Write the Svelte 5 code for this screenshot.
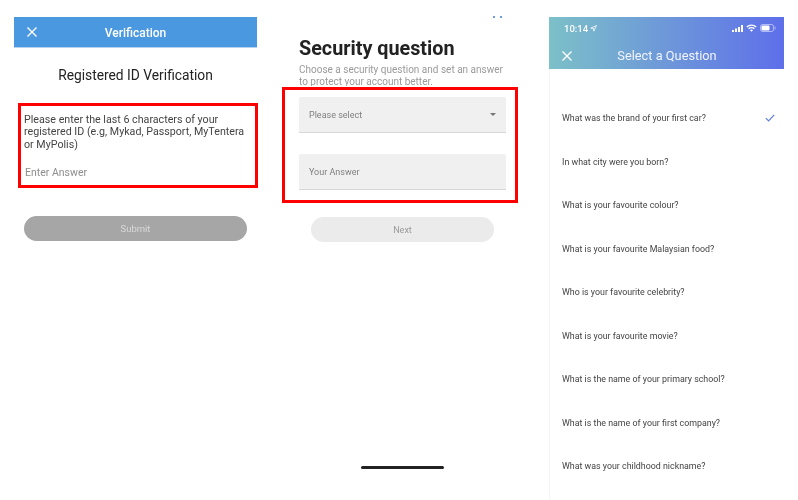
<script>
  const questions = [
    'What was the brand of your first car?',
    'In what city were you born?',
    'What is your favourite colour?',
    'What is your favourite Malaysian food?',
    'Who is your favourite celebrity?',
    'What is your favourite movie?',
    'What is the name of your primary school?',
    'What is the name of your first company?',
    'What was your childhood nickname?'
  ];
  let selected = $state(0);
</script>

<div class="page">
  <section class="verify">
    <header class="bar">
      <svg class="close" width="12" height="12" viewBox="0 0 12 12"><path d="M1.5 1.5l9 9M10.5 1.5l-9 9" /></svg>
      <span>Verification</span>
    </header>
    <h2>Registered ID Verification</h2>
    <div class="red id-box">
      <p>Please enter the last 6 characters of your registered ID (e.g, Mykad, Passport, MyTentera or MyPolis)</p>
      <span class="placeholder">Enter Answer</span>
    </div>
    <button type="button" class="submit">Submit</button>
  </section>

  <section class="security">
    <div class="dots"><i></i><i></i></div>
    <h1>Security question</h1>
    <p class="sub">Choose a security question and set an answer to protect your account better.</p>
    <div class="red form-box">
      <div class="field">
        <span>Please select</span>
        <svg width="6" height="3" viewBox="0 0 6 3"><path d="M0 0h6L3 3z" fill="#757575" /></svg>
      </div>
      <div class="field"><span>Your Answer</span></div>
    </div>
    <button type="button" class="next">Next</button>
    <div class="home"></div>
  </section>

  <section class="questions">
    <header class="grad">
      <div class="status">
        <span class="time">10:14
          <svg width="7" height="7" viewBox="0 0 7 7"><path d="M6.5.5L.8 3.2l2.7.3.3 2.7z" fill="none" stroke="#fff" stroke-width=".8" /></svg>
        </span>
        <span class="indicators">
          <svg width="11" height="7" viewBox="0 0 11 7" fill="#fff"><rect x="0" y="5" width="2" height="2" /><rect x="3" y="3.5" width="2" height="3.5" /><rect x="6" y="2" width="2" height="5" /><rect x="9" y="0" width="2" height="7" /></svg>
          <svg width="11" height="8" viewBox="0 0 11 8" fill="none" stroke="#fff" stroke-width="1.3"><path d="M.8 3a6.6 6.6 0 0 1 9.4 0M2.6 4.8a4 4 0 0 1 5.8 0" /><path d="M5.5 7.8L4 6.2a2.1 2.1 0 0 1 3 0z" fill="#fff" stroke="none" /></svg>
          <svg width="16" height="8" viewBox="0 0 16 8"><rect x=".5" y=".5" width="13" height="7" rx="2" fill="none" stroke="#fff" stroke-opacity=".5" /><rect x="1.5" y="1.5" width="8" height="5" rx="1" fill="#fff" /><rect x="14.5" y="2.5" width="1" height="3" fill="#fff" fill-opacity=".5" /></svg>
        </span>
      </div>
      <div class="title">
        <svg class="close" width="12" height="12" viewBox="0 0 12 12"><path d="M1.5 1.5l9 9M10.5 1.5l-9 9" /></svg>
        <span>Select a Question</span>
      </div>
    </header>
    <ul>
      {#each questions as q, i}
        <li>
          <button type="button" onclick={() => (selected = i)}>
            <span>{q}</span>
            {#if selected === i}
              <svg width="10" height="8" viewBox="0 0 10 8"><path d="M.8 4.2l2.8 2.8L9.2.8" fill="none" stroke="#5f7fe0" stroke-width="1.2" /></svg>
            {/if}
          </button>
        </li>
      {/each}
    </ul>
  </section>
</div>

<style>
  :global(body) {
    margin: 0;
    background: #fff;
  }
  .page {
    display: flex;
    width: 798px;
    height: 500px;
    overflow: hidden;
    font-family: Roboto, "Noto Sans", sans-serif;
    color: #333;
  }
  /* the reference is a scaled-down screenshot, text is a bit soft */
  .page span, .page p, .page h1, .page h2, .page svg, .page .submit, .page .next {
    filter: blur(0.35px);
  }
  .red {
    border: 3px solid #f00;
    box-sizing: border-box;
  }
  button {
    font: inherit;
    border: 0;
    padding: 0;
    background: none;
  }
  .close path {
    fill: none;
    stroke: #fff;
    stroke-width: 1.4;
  }

  /* left phone */
  .verify {
    width: 243px;
    margin: 17px 0 0 14px;
    flex-shrink: 0;
  }
  .bar {
    position: relative;
    display: flex;
    align-items: center;
    justify-content: center;
    height: 29px;
    padding-top: 1px;
    background: #4a98e0;
    border-bottom: 1px solid #b5d3f0;
    color: #fff;
    font-size: 12px;
    font-weight: 500;
  }
  .bar .close {
    position: absolute;
    left: 12px;
    top: 9px;
  }
  .verify h2 {
    margin: 17px 0 0;
    font-size: 13.8px;
    line-height: 20px;
    font-weight: 400;
    color: #222;
    text-align: center;
  }
  .id-box {
    width: 240px;
    height: 85px;
    margin: 18px 0 0 4px;
    padding: 8px 3px 0;
    position: relative;
  }
  .id-box p {
    margin: 0;
    width: 222px;
    font-size: 10.7px;
    line-height: 12.4px;
    color: #444;
  }
  .placeholder {
    display: block;
    margin: 15px 0 0 1px;
    font-size: 10.5px;
    line-height: 14px;
    color: #8e8e8e;
  }
  .submit {
    display: block;
    width: 223px;
    height: 25px;
    margin: 28px 0 0 10px;
    border-radius: 13px;
    background: #a6a6a6;
    color: #d8d8d8;
    font-size: 9.5px;
  }

  /* middle phone */
  .security {
    position: relative;
    width: 236px;
    margin-left: 25px;
    flex-shrink: 0;
    padding-top: 16px;
    box-sizing: border-box;
  }
  .dots {
    position: absolute;
    top: 16px;
    left: 211px;
    display: flex;
    gap: 5px;
  }
  .dots i {
    width: 2px;
    height: 2px;
    background: #6f9be0;
  }
  .security h1 {
    margin: 22px 0 0 17px;
    font-size: 19.8px;
    line-height: 22px;
    font-weight: 700;
    color: #222;
  }
  .sub {
    margin: 4px 0 0 17px;
    width: 215px;
    height: 22px;
    font-size: 10px;
    line-height: 11.7px;
    color: #9a9a9a;
    overflow: hidden;
  }
  .form-box {
    height: 116px;
    margin-top: 1px;
    padding: 7px 9px 0 14px;
    display: flex;
    flex-direction: column;
    gap: 21px;
  }
  .field {
    display: flex;
    align-items: center;
    justify-content: space-between;
    height: 36px;
    padding: 0 10px;
    box-sizing: border-box;
    background: #f0f0f0;
    border-bottom: 1px solid #d8d8d8;
    border-radius: 2px 2px 0 0;
    font-size: 9px;
    color: #808080;
  }
  .next {
    display: block;
    width: 183px;
    height: 25px;
    margin: 14px 0 0 29px;
    border-radius: 13px;
    background: #ebebeb;
    color: #9b9b9b;
    font-size: 9px;
  }
  .home {
    width: 83px;
    height: 3px;
    margin: 224px 0 0 79px;
    border-radius: 2px;
    background: #222;
  }

  /* right phone */
  .questions {
    width: 235px;
    margin: 17px 0 0 31px;
    flex-shrink: 0;
    border-left: 1px solid #f6f6f6;
    box-sizing: border-box;
  }
  .grad {
    height: 52px;
    margin-left: -1px;
    background: linear-gradient(90deg, #7cc0c8, #5e6fea);
    color: #fff;
  }
  .status {
    display: flex;
    align-items: center;
    justify-content: space-between;
    padding: 5px 8px 0 15px;
    height: 12px;
    font-size: 9.5px;
    font-weight: 500;
  }
  .time {
    display: flex;
    align-items: center;
    gap: 2px;
  }
  .indicators {
    display: flex;
    align-items: center;
    gap: 3px;
  }
  .title {
    position: relative;
    margin-top: 12px;
    padding-left: 1px;
    text-align: center;
    font-size: 12.8px;
    line-height: 20px;
    color: #f2f4fc;
  }
  .title .close {
    position: absolute;
    left: 12px;
    top: 4px;
  }
  ul {
    margin: 27px 0 0;
    padding: 0;
    list-style: none;
  }
  li {
    height: 43.5px;
  }
  li button {
    display: flex;
    align-items: center;
    justify-content: space-between;
    width: 100%;
    height: 44px;
    padding: 0 9px 0 12px;
    font-size: 8.85px;
    color: #444;
    text-align: left;
  }
</style>
